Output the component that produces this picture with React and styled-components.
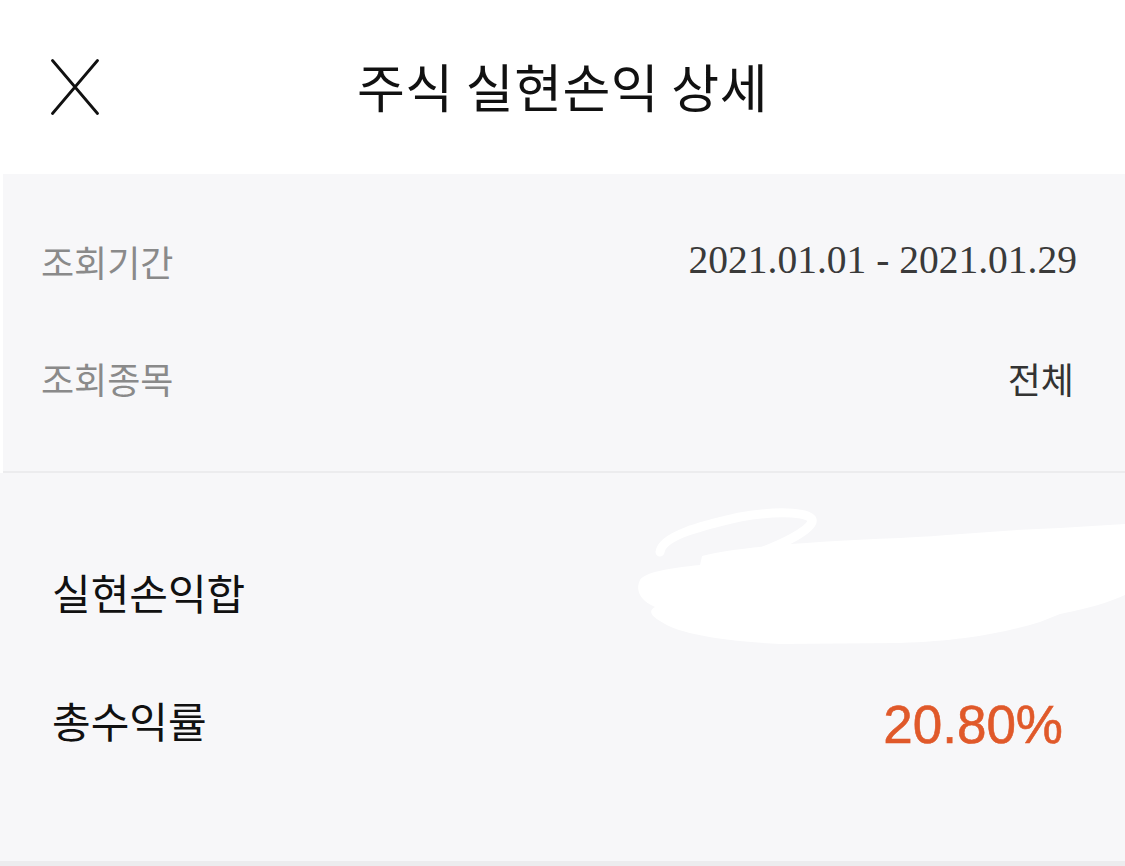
import styled, { createGlobalStyle } from "styled-components"

const GlobalStyle = createGlobalStyle`
  html, body {
    margin: 0;
    padding: 0;
    background: #ffffff;
  }
  body {
    font-family: "Noto Sans CJK KR", "Noto Sans", sans-serif;
    -webkit-font-smoothing: antialiased;
  }
  * { box-sizing: border-box; }
`

const Page = styled.div`
  width: 1125px;
  height: 866px;
  overflow: hidden;
  background: #ffffff;
`

const Header = styled.header`
  height: 174px;
  display: grid;
  grid-template-columns: 1fr auto 1fr;
  align-items: center;
  padding: 0 51px;
`

const CloseButton = styled.button`
  justify-self: start;
  width: 48px;
  height: 56px;
  padding: 0;
  border: 0;
  background: transparent;
  display: flex;
  cursor: pointer;
`

const Title = styled.h1`
  margin: 0 0 2px;
  font-size: 52px;
  font-weight: 400;
  line-height: 1;
  color: #111111;
  letter-spacing: 0.5px;
`

const Panel = styled.section`
  position: relative;
  background: #f7f7f9;
  margin-left: ${p => p.$inset ? "3px" : "0"};
  padding: ${p => p.$pad};
  border-bottom: ${p => p.$border}px solid #ececee;
`

const Row = styled.div`
  height: ${p => p.$h}px;
  display: flex;
  align-items: center;
  justify-content: space-between;
`

const Label = styled.span`
  font-size: ${p => p.$size}px;
  line-height: 1;
  color: ${p => p.$color};
`

const Value = styled.span`
  font-size: 36px;
  line-height: 1;
  color: #333333;
  margin-right: 3px;
`

const DateValue = styled.span`
  font-family: "Liberation Serif", "Times New Roman", serif;
  font-size: 39.5px;
  line-height: 1;
  color: #3a3a3a;
`

const Rate = styled.span`
  font-family: "Liberation Sans", Arial, sans-serif;
  font-size: 53px;
  line-height: 1;
  color: #e0592a;
  margin-top: 8px;
  -webkit-text-stroke: 0.6px #e0592a;
`

const Redaction = styled.svg`
  position: absolute;
  left: 600px;
  top: 27px;
  width: 525px;
  height: 160px;
  pointer-events: none;
`

function CloseIcon() {
  return (
    <svg width="48" height="56" viewBox="0 0 48 56">
      <path d="M1.5 1.5 L46.5 54.5 M46.5 1.5 L1.5 54.5" stroke="#111" strokeWidth="2.8" strokeLinecap="round" fill="none" />
    </svg>
  )
}

export default function App() {
  return (
    <Page>
      <GlobalStyle />
      <Header>
        <CloseButton aria-label="닫기"><CloseIcon /></CloseButton>
        <Title>주식 실현손익 상세</Title>
      </Header>

      <Panel $inset $pad="28px 48px 35px 38px" $border={2}>
        <Row $h={117}>
          <Label $size={36} $color="#8a8a8a">조회기간</Label>
          <DateValue>2021.01.01 - 2021.01.29</DateValue>
        </Row>
        <Row $h={117}>
          <Label $size={36} $color="#8a8a8a">조회종목</Label>
          <Value>전체</Value>
        </Row>
      </Panel>

      <Panel $pad="55px 62px 77px 52px" $border={5}>
        <Row $h={128}>
          <Label $size={42} $color="#111111">실현손익합</Label>
        </Row>
        <Row $h={128}>
          <Label $size={42} $color="#111111">총수익률</Label>
          <Rate>20.80%</Rate>
        </Row>
        <Redaction viewBox="600 500 525 160">
          <path
            d="M640,580 C645,572 670,568 700,565 L702,556 C730,548 800,542 900,538 C960,535 1000,530 1060,528 L1125,524 L1125,595 C1110,602 1090,608 1060,614 L1040,622 C1000,634 960,641 900,643 L780,644 C720,641 680,633 665,624 C650,616 648,611 655,607 C640,601 635,590 640,580 Z"
            fill="#ffffff"
          />
          <path
            d="M660,552 C662,536 700,526 740,517 C780,510 815,512 812,522 C808,532 780,545 758,553"
            stroke="#ffffff"
            strokeWidth="9"
            strokeLinecap="round"
            fill="none"
          />
        </Redaction>
      </Panel>
    </Page>
  )
}
